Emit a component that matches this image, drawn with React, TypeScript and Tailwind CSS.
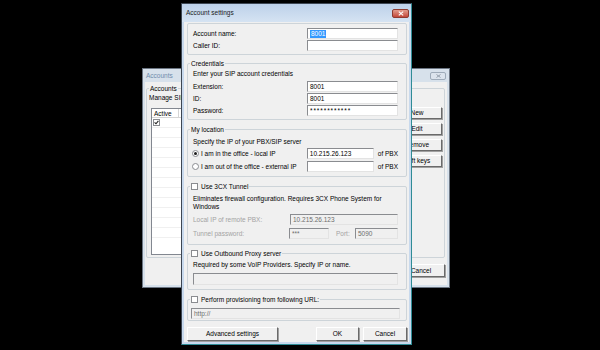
import React from "react";

function Inp({
  className,
  value,
  disabled,
  selected,
  mono,
}: {
  className: string;
  value?: string;
  disabled?: boolean;
  selected?: boolean;
  mono?: boolean;
}) {
  return (
    <div
      className={
        "flex items-center pl-[2px] border border-t-[#8a8c90] border-l-[#8a8c90] border-r-[#e3e3e3] border-b-[#e3e3e3] overflow-hidden whitespace-nowrap " +
        (disabled ? "bg-[#f0f0f0] text-[#6d6d6d] " : "bg-white text-black ") +
        className
      }
    >
      {value ? (
        <span
          className={
            (selected ? "bg-[#3399ff] text-white px-[1px] " : "") +
            (mono ? "tracking-[0.9px] " : "") +
            "leading-[8px]"
          }
        >
          {value}
        </span>
      ) : null}
    </div>
  );
}

function Radio({ checked }: { checked?: boolean }) {
  return (
    <div className="w-[7px] h-[7px] shrink-0 rounded-full border border-[#8a8c90] bg-white flex items-center justify-center">
      {checked ? <div className="w-[3px] h-[3px] rounded-full bg-[#1c1c1c]" /> : null}
    </div>
  );
}

function Check({ checked }: { checked?: boolean }) {
  return (
    <div className="w-[7px] h-[7px] shrink-0 border border-[#8a8c90] bg-white flex items-center justify-center">
      {checked ? (
        <svg width="5" height="5" viewBox="0 0 5 5">
          <path d="M0.6 2.4 L2 3.8 L4.4 0.9" stroke="#222" strokeWidth="1.1" fill="none" />
        </svg>
      ) : null}
    </div>
  );
}

function Legend({ children }: { children: React.ReactNode }) {
  return (
    <div className="-mt-[5px] ml-[2px] px-[1px] w-fit h-[9px] leading-[9px] bg-[#f0f0f0] flex items-center gap-[3px] whitespace-nowrap">
      {children}
    </div>
  );
}

function Btn({ className, children }: { className: string; children: React.ReactNode }) {
  return (
    <div
      className={
        "flex items-center justify-center bg-[#f0f0f0] border border-t-[#ffffff] border-l-[#ffffff] border-r-[#6a6a6a] border-b-[#6a6a6a] shadow-[1px_1px_0_#a0a0a0] whitespace-nowrap " +
        className
      }
    >
      {children}
    </div>
  );
}

const groupCls = "border border-[#cdd4d9] rounded-[2px] flex flex-col";

export default function App() {
  return (
    <div className="relative w-[600px] h-[350px] bg-black overflow-hidden font-['Liberation_Sans',Arial,sans-serif] text-[6.5px] leading-[8px] text-black">
      {/* Background "Accounts" window */}
      <div className="absolute left-[142px] top-[68px] w-[308px] h-[220px] flex flex-col border border-[#6b7582] bg-[#d7e1eb]">
        <div className="h-[13px] flex items-center pl-[3px] pr-[3px]">
          <span className="text-[#6f8cab]">Accounts</span>
          <div className="ml-auto w-[16px] h-[8px] rounded-[2px] border border-[#9eabb9] bg-[#dce4ed] flex items-center justify-center">
            <svg width="5" height="4" viewBox="0 0 5 4">
              <path d="M0.5 0.5 L4.5 3.5 M4.5 0.5 L0.5 3.5" stroke="#8a96a4" strokeWidth="0.9" />
            </svg>
          </div>
        </div>
        <div className="flex-1 mx-[2px] mb-[2px] bg-[#f0f0f0] pl-[1px] pr-[2px] flex flex-col">
          <div className={groupCls + " mt-[6px] pb-[2px]"}>
            <Legend>Accounts</Legend>
            <div className="h-[9px] leading-[9px] ml-[2px] whitespace-nowrap">Manage SIP</div>
            <div className="flex mt-[5px] pr-[2px]">
              <div className="flex-1 ml-[4px] mt-[1px] h-[147px] border border-[#828790] bg-white flex flex-col">
                <div className="h-[9px] flex border-b border-[#d5d5d5]">
                  <div className="w-[27px] pl-[2px] leading-[9px] border-r border-[#d5d5d5]">Active</div>
                  <div className="pl-[2px] leading-[9px]" />
                </div>
                <div className="h-[10px] flex items-center border-b border-[#f0f0f0]">
                  <div className="w-[27px] pl-[1px]">
                    <Check checked />
                  </div>
                </div>
                <div className="h-[10px] border-b border-[#f0f0f0]" />
                <div className="h-[10px] border-b border-[#f0f0f0]" />
                <div className="h-[10px] border-b border-[#f0f0f0]" />
                <div className="h-[10px] border-b border-[#f0f0f0]" />
                <div className="h-[10px] border-b border-[#f0f0f0]" />
                <div className="h-[10px] border-b border-[#f0f0f0]" />
                <div className="h-[10px] border-b border-[#f0f0f0]" />
                <div className="h-[10px] border-b border-[#f0f0f0]" />
                <div className="h-[10px] border-b border-[#f0f0f0]" />
                <div className="h-[10px] border-b border-[#f0f0f0]" />
                <div className="h-[10px] border-b border-[#f0f0f0]" />
              </div>
              <div className="w-[50px] ml-[6px] flex flex-col gap-[4px]">
                <Btn className="h-[12px] w-[50px]">New</Btn>
                <Btn className="h-[12px] w-[50px]">Edit</Btn>
                <Btn className="h-[12px] w-[50px]">Remove</Btn>
                <Btn className="h-[12px] w-[50px]">Soft keys</Btn>
              </div>
            </div>
          </div>
          <div className="flex justify-end mt-[6px]">
            <Btn className="h-[13px] w-[48px]">Cancel</Btn>
          </div>
        </div>
      </div>

      {/* Foreground "Account settings" dialog */}
      <div className="absolute left-[181px] top-[3px] w-[231px] h-[342px] flex flex-col border border-[#3d4652] border-r-[#2f8c96] border-b-[#2f8c96] bg-[#c8d9ed]">
        <div className="h-[18px] shrink-0 flex items-center pl-[4px] pr-[2px] bg-gradient-to-b from-[#bdd1e9] to-[#d5e3f2]">
          <span className="text-[#1a1a1a]">Account settings</span>
          <div className="ml-auto w-[17px] h-[9px] rounded-[2px] border border-[#8e3b30] bg-gradient-to-b from-[#e29b8d] to-[#c2473a] flex items-center justify-center">
            <svg width="6" height="5" viewBox="0 0 6 5">
              <path d="M0.8 0.6 L5.2 4.4 M5.2 0.6 L0.8 4.4" stroke="#ffffff" strokeWidth="1.2" />
            </svg>
          </div>
        </div>
        <div className="flex-1 mx-[2px] mb-[2px] bg-[#f0f0f0] pt-[1px] pl-[3px] pr-[2px] flex flex-col">
          {/* Group 1 */}
          <div className={groupCls + " h-[32px] pt-[4px] pl-[5px] pr-[8px] gap-[1px]"}>
            <div className="h-[11px] flex items-center">
              <span>Account name:</span>
              <Inp className="ml-auto w-[91px] h-[11px]" value="8001" selected />
            </div>
            <div className="h-[11px] flex items-center">
              <span>Caller ID:</span>
              <Inp className="ml-auto w-[91px] h-[11px]" />
            </div>
          </div>

          {/* Credentials */}
          <div className={groupCls + " mt-[8px] pb-[3px]"}>
            <Legend>Credentials</Legend>
            <div className="flex flex-col pl-[5px] pr-[8px]">
              <div className="h-[11px] flex items-center">Enter your SIP account credentials</div>
              <div className="mt-[2px] flex flex-col gap-[1px]">
                <div className="h-[11px] flex items-center">
                  <span>Extension:</span>
                  <Inp className="ml-auto w-[91px] h-[11px]" value="8001" />
                </div>
                <div className="h-[11px] flex items-center">
                  <span>ID:</span>
                  <Inp className="ml-auto w-[91px] h-[11px]" value="8001" />
                </div>
                <div className="h-[11px] flex items-center">
                  <span>Password:</span>
                  <Inp className="ml-auto w-[91px] h-[11px]" value="************" mono />
                </div>
              </div>
            </div>
          </div>

          {/* My location */}
          <div className={groupCls + " mt-[9px] pb-[4px]"}>
            <Legend>My location</Legend>
            <div className="flex flex-col pr-[8px]">
              <div className="mt-[2px] h-[11px] pl-[5px] flex items-center">Specify the IP of your PBX/SIP server</div>
              <div className="mt-[1px] h-[11px] pl-[4px] flex items-center">
                <Radio checked />
                <span className="ml-[2px]">I am in the office - local IP</span>
                <Inp className="ml-auto w-[67px] h-[11px]" value="10.215.26.123" />
                <span className="ml-[4px]">of PBX</span>
              </div>
              <div className="mt-[2px] h-[11px] pl-[4px] flex items-center">
                <Radio />
                <span className="ml-[2px]">I am out of the office - external IP</span>
                <Inp className="ml-auto w-[67px] h-[11px]" />
                <span className="ml-[4px]">of PBX</span>
              </div>
            </div>
          </div>

          {/* 3CX Tunnel */}
          <div className={groupCls + " mt-[9px] pb-[5px]"}>
            <Legend>
              <Check />
              <span>Use 3CX Tunnel</span>
            </Legend>
            <div className="flex flex-col pl-[5px] pr-[8px]">
              <div className="mt-[4px] leading-[8px]">
                Eliminates firewall configuration. Requires 3CX Phone System for
                <br />
                Windows
              </div>
              <div className="mt-[3px] h-[11px] flex items-center">
                <span className="text-[#a3a3a3]">Local IP of remote PBX:</span>
                <Inp className="ml-auto w-[108px] h-[11px]" value="10.215.26.123" disabled />
              </div>
              <div className="mt-[3px] h-[11px] flex items-center">
                <span className="w-[96px] text-[#a3a3a3]">Tunnel password:</span>
                <Inp className="w-[40px] h-[11px]" value="***" disabled />
                <span className="ml-[7px] text-[#a3a3a3]">Port:</span>
                <Inp className="ml-auto w-[43px] h-[11px]" value="5090" disabled />
              </div>
            </div>
          </div>

          {/* Outbound proxy */}
          <div className={groupCls + " mt-[8px] pb-[4px]"}>
            <Legend>
              <Check />
              <span>Use Outbound Proxy server</span>
            </Legend>
            <div className="flex flex-col pl-[5px] pr-[8px]">
              <div className="mt-[1px] h-[11px] flex items-center">
                Required by some VoIP Providers. Specify IP or name.
              </div>
              <Inp className="mt-[3px] w-full h-[12px]" disabled />
            </div>
          </div>

          {/* Provisioning */}
          <div className={groupCls + " mt-[9px] pb-[1px]"}>
            <Legend>
              <Check />
              <span>Perform provisioning from following URL:</span>
            </Legend>
            <div className="flex flex-col pl-[3px] pr-[6px]">
              <Inp className="mt-[4px] w-full h-[11px]" value="http://" disabled />
            </div>
          </div>

          {/* Buttons */}
          <div className="mt-[6px] flex items-center">
            <Btn className="h-[14px] w-[91px]">Advanced settings</Btn>
            <Btn className="ml-auto h-[14px] w-[43px]">OK</Btn>
            <Btn className="ml-[4px] h-[14px] w-[44px]">Cancel</Btn>
          </div>
        </div>
      </div>
    </div>
  );
}
